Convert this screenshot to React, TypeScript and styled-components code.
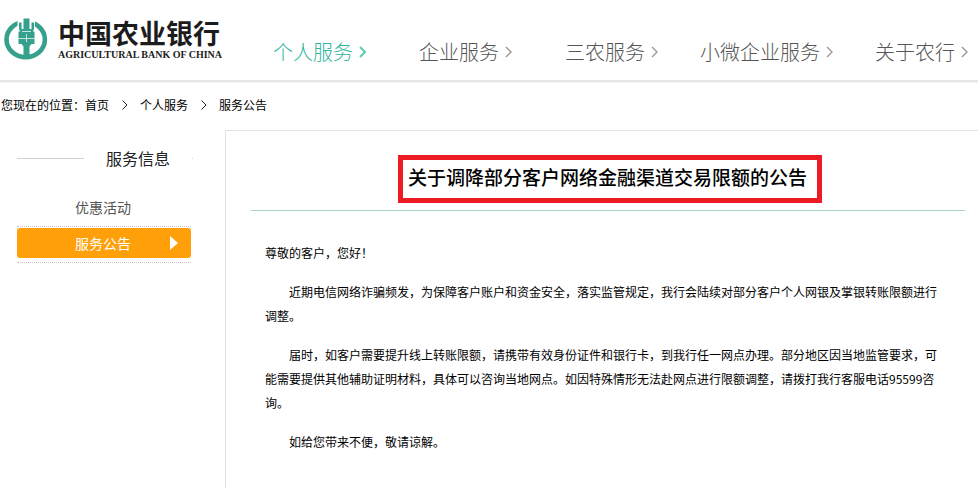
import React from "react";
import styled, { createGlobalStyle } from "styled-components";

const GlobalStyle = createGlobalStyle`
  * { box-sizing: border-box; }
  body {
    margin: 0;
    background: #fff;
    color: #000;
    font-family: "Noto Sans CJK SC", sans-serif;
    font-size: 12px;
    line-height: 24px;
  }
  a { color: inherit; text-decoration: none; }
  ul, ol { list-style: none; margin: 0; padding: 0; }
`;

const Page = styled.div`
  overflow-x: hidden;
`;

const Header = styled.header`
  display: flex;
  align-items: flex-start;
  height: 82px;
  padding-left: 4px;
  border-bottom: 2px solid #e6e6e6;
  box-shadow: 0 1px 1px #f7f7f7;
`;

const Brand = styled.a`
  display: flex;
  flex: none;
  align-items: center;
  gap: 10px;
  width: 269px;
  height: 78px;
  color: #1c1c1c;
`;

const BrandNames = styled.span`
  display: flex;
  flex-direction: column;
  white-space: nowrap;
`;

const BrandChinese = styled.span`
  font-size: 27px;
  font-weight: 700;
  line-height: 32px;
`;

const BrandEnglish = styled.span`
  font-family: "Liberation Serif", serif;
  font-size: 10px;
  font-weight: 700;
  line-height: 12px;
`;

const NavList = styled.ul`
  display: flex;
  padding-top: 36px;
`;

const NavItem = styled.li<{ $tight?: boolean }>`
  flex: none;
  padding-right: ${(p) => (p.$tight ? 41 : 52)}px;
`;

const NavLink = styled.a<{ $active?: boolean }>`
  display: flex;
  align-items: center;
  gap: 6px;
  color: ${(p) => (p.$active ? "#2fb59c" : "#555")};
  font-size: 20px;
  font-weight: 300;
  line-height: 32px;
  white-space: nowrap;

  svg { color: ${(p) => (p.$active ? "#5cccb0" : "#999")}; }
`;

const Breadcrumb = styled.nav`
  padding: 11px 1px 0;

  ol { display: flex; }
  li { display: flex; align-items: center; }
  svg { margin: 0 12px 0 13px; }
`;

const Columns = styled.div`
  display: flex;
  align-items: stretch;
  padding-top: 13px;
`;

const Sidebar = styled.aside`
  flex: none;
  width: 225px;
  padding: 16px 32px 0 17px;
`;

const SidebarTitle = styled.h2`
  display: flex;
  align-items: center;
  margin: 0;
  color: #222;
  font-size: 16px;
  font-weight: 400;
  line-height: 24px;
  gap: 22px;
  white-space: nowrap;

  &::before {
    content: "";
    width: 67px;
    border-top: 1px solid #d2d2d2;
  }
  &::after {
    content: "";
    width: 1px;
    border-top: 1px solid #d2d2d2;
  }
`;

const Menu = styled.ul`
  width: 174px;
  padding-top: 22px;
`;

const MenuItem = styled.li`
  padding-bottom: 4px;
  border-bottom: 1px dotted #c4c4c4;

  & + & { padding-top: 1px; }
`;

const MenuLink = styled.a<{ $active?: boolean }>`
  display: flex;
  align-items: center;
  justify-content: space-between;
  padding: 0 13px 0 58px;
  border-radius: 3px;
  background: ${(p) => (p.$active ? "#ff9f0a" : "transparent")};
  color: ${(p) => (p.$active ? "#fff" : "#555")};
  font-size: 14px;
  line-height: 30px;
`;

const Article = styled.article`
  flex: 1;
  min-width: 0;
  min-height: 358px;
  padding: 24px 13px 24px 25px;
  border: solid #e2e2e2;
  border-width: 1px 0 0 1px;
`;

const ArticleHeader = styled.header`
  display: flex;
  justify-content: center;
  padding: 0 0 7px 4px;
  border-bottom: 1px solid #a6d4c4;
`;

const ArticleTitle = styled.h1`
  margin: 0;
  padding: 0 10px 4px 5px;
  border: 5px solid #ed1c24;
  font-size: 19px;
  font-weight: 500;
  line-height: 34px;
`;

const ArticleBody = styled.div`
  display: flex;
  flex-direction: column;
  gap: 15px;
  padding: 30px 24px 0 14px;
`;

const Paragraph = styled.p<{ $indent?: boolean }>`
  margin: 0;
  text-indent: ${(p) => (p.$indent ? "2em" : "0")};
`;

const Emblem = () => (
  <svg width="44" height="42" viewBox="0 0 44 42" aria-hidden="true">
    <ellipse cx="21.700" cy="21.500" rx="19.200" ry="17.700" fill="none" stroke="#35a08c" strokeWidth="4.600" />
    <path d="M13.500 0h17.500v9H13.500z" fill="#fff" />
    <path
      d="M19.500.5h6v10.500h2V4.500h2.500V11l-1.200 2.500h1.700v12.500h-3l-2 2.500V39h-6V28.500l-2-2.500h-3V13.500h1.700L15 11V4.500h2.500V11h2z"
      fill="#35a08c"
    />
    <path d="M18 13.500h9M14 20.500h17M22.500 16v8" stroke="#c4e6de" strokeWidth="1" fill="none" />
  </svg>
);

const NavChevron = ({ bold }: { bold?: boolean }) => (
  <svg width="8" height="12" viewBox="0 0 8 12" aria-hidden="true">
    <path d="M1 1l5 5-5 5" fill="none" stroke="currentColor" strokeWidth={bold ? 2 : 1.4} />
  </svg>
);

const CrumbChevron = () => (
  <svg width="6" height="10" viewBox="0 0 6 10" aria-hidden="true">
    <path d="M.5 .5L5 5 .5 9.500" fill="none" stroke="#222" />
  </svg>
);

const MenuArrow = () => (
  <svg width="8" height="14" viewBox="0 0 8 14" aria-hidden="true">
    <path d="M0 0l8 7-8 7z" fill="#fff" />
  </svg>
);

const navItems = [
  { label: "个人服务", active: true },
  { label: "企业服务" },
  { label: "三农服务", tight: true },
  { label: "小微企业服务", tight: true },
  { label: "关于农行", tight: true },
];

const paragraphs = [
  "近期电信网络诈骗频发，为保障客户账户和资金安全，落实监管规定，我行会陆续对部分客户个人网银及掌银转账限额进行调整。",
  "届时，如客户需要提升线上转账限额，请携带有效身份证件和银行卡，到我行任一网点办理。部分地区因当地监管要求，可能需要提供其他辅助证明材料，具体可以咨询当地网点。如因特殊情形无法赴网点进行限额调整，请拨打我行客服电话95599咨询。",
  "如给您带来不便，敬请谅解。",
];

export default function App() {
  return (
    <Page>
      <GlobalStyle />
      <Header>
        <Brand href="#home">
          <Emblem />
          <BrandNames>
            <BrandChinese>中国农业银行</BrandChinese>
            <BrandEnglish>AGRICULTURAL BANK OF CHINA</BrandEnglish>
          </BrandNames>
        </Brand>
        <nav>
          <NavList>
            {navItems.map((item) => (
              <NavItem key={item.label} $tight={item.tight}>
                <NavLink href="#nav" $active={item.active}>
                  {item.label}
                  <NavChevron bold={item.active} />
                </NavLink>
              </NavItem>
            ))}
          </NavList>
        </nav>
      </Header>

      <Breadcrumb>
        <ol>
          <li>
            您现在的位置：<a href="#home">首页</a>
            <CrumbChevron />
          </li>
          <li>
            <a href="#personal">个人服务</a>
            <CrumbChevron />
          </li>
          <li>
            <a href="#notices">服务公告</a>
          </li>
        </ol>
      </Breadcrumb>

      <Columns>
        <Sidebar>
          <SidebarTitle>服务信息</SidebarTitle>
          <Menu>
            <MenuItem>
              <MenuLink href="#offers">优惠活动</MenuLink>
            </MenuItem>
            <MenuItem>
              <MenuLink href="#notices" $active>
                服务公告
                <MenuArrow />
              </MenuLink>
            </MenuItem>
          </Menu>
        </Sidebar>
        <Article>
          <ArticleHeader>
            <ArticleTitle>关于调降部分客户网络金融渠道交易限额的公告</ArticleTitle>
          </ArticleHeader>
          <ArticleBody>
            <Paragraph>尊敬的客户，您好！</Paragraph>
            {paragraphs.map((text) => (
              <Paragraph key={text} $indent>
                {text}
              </Paragraph>
            ))}
          </ArticleBody>
        </Article>
      </Columns>
    </Page>
  );
}
